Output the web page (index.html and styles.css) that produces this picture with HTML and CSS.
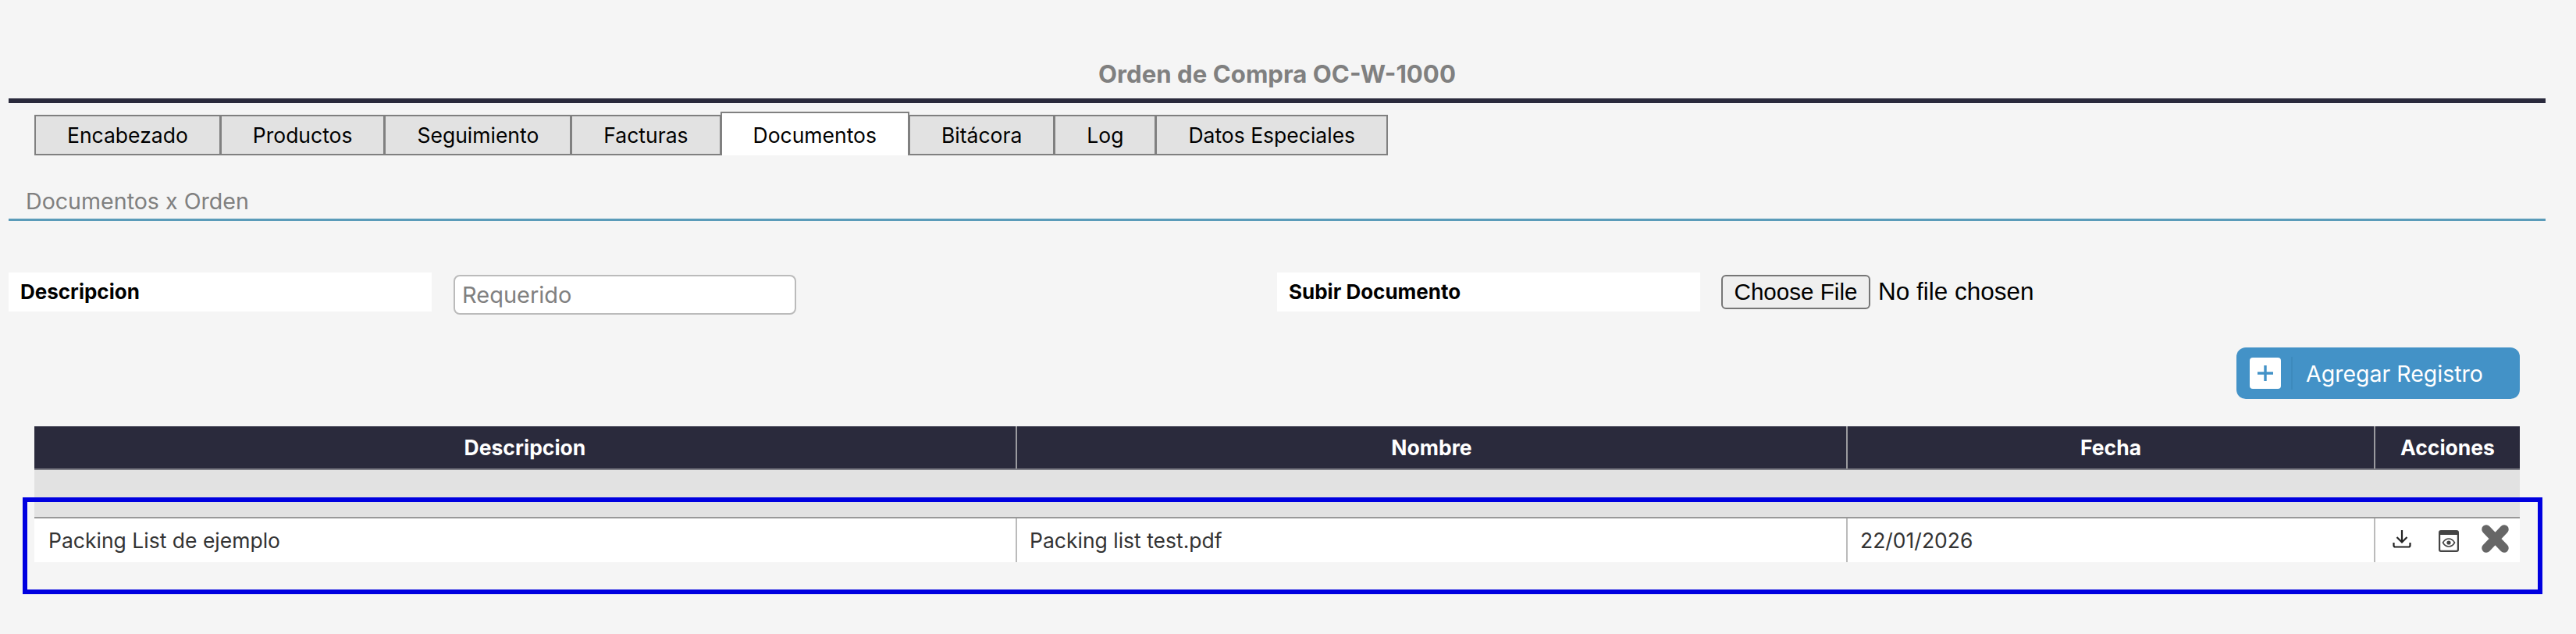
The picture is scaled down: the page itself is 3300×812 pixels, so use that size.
FILE: index.html
```html
<!DOCTYPE html>
<html lang="es">
<head>
<meta charset="utf-8">
<title>Orden de Compra OC-W-1000</title>
<link rel="stylesheet" href="styles.css">
</head>
<body>
<main class="page">
  <h1 class="title">Orden de Compra OC-W-1000</h1>
  <nav class="tabs">
    <a class="tab">Encabezado</a>
    <a class="tab">Productos</a>
    <a class="tab">Seguimiento</a>
    <a class="tab">Facturas</a>
    <a class="tab active">Documentos</a>
    <a class="tab">Bitácora</a>
    <a class="tab">Log</a>
    <a class="tab">Datos Especiales</a>
  </nav>
  <h2 class="section">Documentos x Orden</h2>
  <form class="form">
    <div class="field field-left">
      <label class="label">Descripcion</label>
      <input class="text-input" type="text" placeholder="Requerido">
    </div>
    <div class="field field-right">
      <label class="label">Subir Documento</label>
      <input class="file-input" type="file">
    </div>
  </form>
  <div class="toolbar">
    <button class="add-btn" type="button">
      <span class="add-icon">
        <svg width="26" height="26" viewBox="0 0 26 26"><path d="M13 3v20M3 13h20" stroke="#4392c7" stroke-width="3.4" fill="none"/></svg>
      </span>
      <span class="add-text">Agregar Registro</span>
    </button>
  </div>
  <table class="grid">
    <colgroup>
      <col class="c1"><col class="c2"><col class="c3"><col class="c4">
    </colgroup>
    <thead>
      <tr class="head"><th>Descripcion</th><th>Nombre</th><th>Fecha</th><th>Acciones</th></tr>
      <tr class="filter"><td colspan="4"></td></tr>
    </thead>
    <tbody>
      <tr class="row">
        <td>Packing List de ejemplo</td>
        <td>Packing list test.pdf</td>
        <td>22/01/2026</td>
        <td class="actions">
          <svg class="ic-down" width="24" height="24" viewBox="0 0 24 24"><path d="M12 1v15M5.500 10l6.500 6.500 6.500-6.500M1.500 17v3.500a2 2 0 0 0 2 2h17a2 2 0 0 0 2-2V17" fill="none" stroke="#222" stroke-width="2.200"/></svg>
          <svg class="ic-view" width="26" height="28" viewBox="0 0 26 28"><path fill-rule="evenodd" fill="#444" d="M3 0h20a3 3 0 0 1 3 3v22a3 3 0 0 1-3 3H3a3 3 0 0 1-3-3V3a3 3 0 0 1 3-3zM2.200 6v19a.8.8 0 0 0 .8.8h20a.8.8 0 0 0 .8-.8V6z"/><path d="M5.500 16c2-3.400 4.600-5 7.500-5s5.500 1.600 7.500 5c-2 3.400-4.600 5-7.500 5s-5.500-1.600-7.500-5z" fill="none" stroke="#444" stroke-width="1.600"/><circle cx="13" cy="16" r="2.600" fill="#444"/></svg>
          <svg class="ic-x" width="37" height="38" viewBox="0 0 37 38"><path d="M7 7l23 24M30 7L7 31" stroke="#666" stroke-width="11.500" stroke-linecap="round" stroke-linejoin="round" fill="none"/></svg>
        </td>
      </tr>
    </tbody>
  </table>
  <div class="highlight"></div>
</main>
</body>
</html>
```
FILE: styles.css
```css
* { box-sizing: border-box; }
html, body { margin: 0; padding: 0; background: #f5f5f5; }
body { font-family: Inter, "Liberation Sans", sans-serif; color: #000; }
.page { position: relative; height: 812px; padding: 0 39px 0 11px; overflow: hidden; }
.title {
  margin: 0; height: 132px; padding-top: 73px;
  border-bottom: 6px solid #2a2a3c;
  font-size: 31.2px; line-height: 44px; font-weight: 700; color: #808080; text-align: center;
}
.tabs { display: flex; align-items: flex-end; height: 67px; margin: 0 0 0 33px; }
.tab {
  display: block; height: 52px; padding: 0 40px;
  border: 2px solid #808080; margin-left: -1px;
  background: #e2e2e2; font-size: 26.5px; line-height: 48px; color: #000; white-space: nowrap;
}
.tab:first-child { margin-left: 0; }
.tab.active { height: 56px; background: #fff; border-bottom: 0; line-height: 56px; }
.section {
  margin: 0; height: 84px; padding: 41px 0 0 22px;
  border-bottom: 3px solid #5a9bb9;
  font-size: 28.6px; line-height: 36px; font-weight: 400; color: #808080;
}
.form { display: flex; height: 162px; padding-top: 66px; }
.field { display: flex; align-items: flex-start; }
.field-left { width: 1625px; }
.label {
  display: block; width: 542px; height: 50px; padding-left: 15px;
  background: #fff; font-size: 26px; line-height: 50px; font-weight: 700; color: #000;
}
.text-input {
  width: 439px; height: 51px; margin: 3px 0 0 28px; padding: 0 9px;
  border: 2px solid #bbb; border-radius: 8px; background: #fff;
  font: 29px Inter, sans-serif; color: #000;
}
.text-input::placeholder { color: #808080; opacity: 1; }
.file-input { margin: 3px 0 0 27px; font: 31.5px "Liberation Sans", sans-serif; color: #000; }
.file-input::file-selector-button {
  height: 44px; width: 191px; padding: 0; margin-right: 10px;
  border: 2px solid #767676; border-radius: 6px; background: #efefef;
  font: 29.600px "Liberation Sans", sans-serif; color: #000;
}
.toolbar { display: flex; justify-content: flex-end; height: 101px; padding: 0 33px 35px 0; }
.add-btn {
  display: flex; align-items: center; width: 363px; height: 66px; padding: 0 0 0 17px;
  border: 0; border-radius: 12px; background: #4392c7; color: #fff;
}
.add-icon {
  display: flex; align-items: center; justify-content: center;
  width: 40px; height: 40px; border-radius: 4px; background: #fff;
}
.add-text {
  margin-left: 13px; padding: 2px 0 0 17px; border-left: 2px solid #3d8abd;
  font: 28.5px/40px Inter, sans-serif;
}
.grid { width: 3184px; margin-left: 33px; border-collapse: collapse; table-layout: fixed; }
.c1 { width: 1258px; } .c2 { width: 1064px; } .c3 { width: 676px; } .c4 { width: 186px; }
.head th {
  height: 55px; padding: 0; background: #2a2a3c; color: #fff;
  border-bottom: 2px solid #7f7f87; border-left: 2px solid #9a9a9f;
  font-size: 26.5px; font-weight: 700; text-align: center;
}
.head th:first-child { border-left: 0; }
.filter td { height: 62px; padding: 0; background: #e2e2e2; border-bottom: 2px solid #999; }
.row td {
  height: 57px; padding: 0 0 0 16px; background: #fff;
  border-left: 2px solid #bbb; font-size: 26.5px; color: #333; vertical-align: middle;
}
.row td:first-child { border-left: 0; padding-left: 18px; }
.row td.actions { padding: 0; font-size: 0; white-space: nowrap; vertical-align: top; }
.actions svg { display: inline-block; vertical-align: top; }
.ic-down { margin: 14px 0 0 22px; }
.ic-view { margin: 15px 0 0 35px; }
.ic-x { margin: 7px 0 0 28px; }
.highlight {
  position: absolute; left: 29px; top: 637px; width: 3228px; height: 124px;
  border: 6px solid #0000e0; pointer-events: none;
}
```
